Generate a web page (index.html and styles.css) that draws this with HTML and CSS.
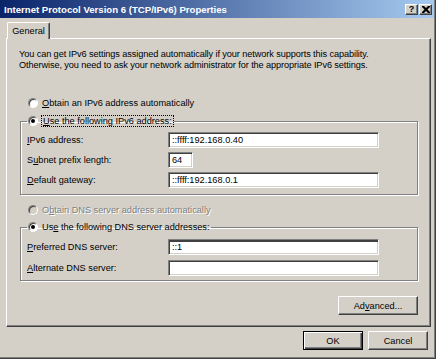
FILE: index.html
```html
<!DOCTYPE html>
<html lang="en">
<head>
    <meta charset="UTF-8">
    <title>Internet Protocol Version 6 (TCP/IPv6) Properties</title>
    <link rel="stylesheet" href="styles.css">
</head>
<body>
    <div class="window">
        <div class="titlebar">
            <span class="title">Internet Protocol Version 6 (TCP/IPv6) Properties</span>
            <div class="caption-btns">
                <span class="cap-btn help">?</span>
                <span class="cap-btn close">
                    <svg width="8" height="7" viewBox="0 0 8 7"><path d="M0 0h2l2 2 2-2h2v1l-2.5 2.5 2.5 2.5v1h-2l-2-2-2 2h-2v-1l2.5-2.5-2.5-2.5z"/></svg>
                </span>
            </div>
        </div>

        <div class="client">
            <div class="tabs"><span class="tab">General</span></div>

            <div class="panel">
                <p class="intro">You can get IPv6 settings assigned automatically if your network supports this capability.<br>Otherwise, you need to ask your network administrator for the appropriate IPv6 settings.</p>

                <div class="radio-row obtain"><span class="radio"></span><span><u>O</u>btain an IPv6 address automatically</span></div>

                <fieldset class="group">
                    <legend><span class="radio on"></span><span class="focus"><u>U</u>se the following IPv6 address:</span></legend>
                    <div class="field">
                        <span class="lbl"><u>I</u>Pv6 address:</span>
                        <span class="box">::ffff:192.168.0.40</span>
                    </div>
                    <div class="field">
                        <span class="lbl">S<u>u</u>bnet prefix length:</span>
                        <span class="box short">64</span>
                    </div>
                    <div class="field">
                        <span class="lbl"><u>D</u>efault gateway:</span>
                        <span class="box">::ffff:192.168.0.1</span>
                    </div>
                </fieldset>

                <div class="radio-row disabled"><span class="radio off"></span><span>O<u>b</u>tain DNS server address automatically</span></div>

                <fieldset class="group dns">
                    <legend><span class="radio on"></span><span>Us<u>e</u> the following DNS server addresses:</span></legend>
                    <div class="field">
                        <span class="lbl"><u>P</u>referred DNS server:</span>
                        <span class="box active">::1</span>
                    </div>
                    <div class="field">
                        <span class="lbl"><u>A</u>lternate DNS server:</span>
                        <span class="box"></span>
                    </div>
                </fieldset>

                <div class="panel-foot">
                    <span class="btn wide">Ad<u>v</u>anced...</span>
                </div>
            </div>

            <div class="dialog-btns">
                <span class="btn default">OK</span>
                <span class="btn">Cancel</span>
            </div>
        </div>
    </div>
</body>
</html>
```

FILE: styles.css
```css
body {
    margin: 0;
    font-family: "Liberation Sans", Arial, sans-serif;
    font-size: 9.2px;
    color: #000;
}
.window {
    width: 436px;
    height: 359px;
    box-sizing: border-box;
    background: #d4d0c8;
    border-right: 1px solid #404040;
    border-bottom: 1px solid #404040;
    box-shadow: inset -1px -1px 0 #808080;
}
.titlebar {
    width: 434px;
    height: 18px;
    box-sizing: border-box;
    padding: 0 2px 0 4px;
    display: flex;
    align-items: center;
    justify-content: space-between;
    background: linear-gradient(to right, #0a246a, #a6caf0);
}
.title {
    color: #fff;
    font-weight: bold;
    font-size: 9.6px;
}
.caption-btns {
    display: flex;
    gap: 1px;
}
.cap-btn {
    width: 13px;
    height: 11px;
    box-sizing: border-box;
    background: #d4d0c8;
    border: 1px solid;
    border-color: #fff #404040 #404040 #fff;
    box-shadow: inset -1px -1px 0 #808080;
    display: flex;
    align-items: center;
    justify-content: center;
}
.help {
    font-weight: bold;
    font-size: 9px;
    line-height: 9px;
}
.close svg {
    display: block;
}
.client {
    padding: 4px 4px 0 6px;
}
.tabs {
    display: flex;
    padding-left: 1px;
}
.tab {
    position: relative;
    height: 17px;
    width: 43px;
    box-sizing: border-box;
    margin-bottom: -1px;
    background: #d4d0c8;
    border: 1px solid;
    border-bottom: none;
    border-color: #fff #404040 #fff #fff;
    box-shadow: inset -1px 0 0 #808080;
    border-radius: 2px 2px 0 0;
    display: flex;
    align-items: center;
    justify-content: center;
}
.panel {
    height: 289px;
    box-sizing: border-box;
    border: 1px solid;
    border-color: #fff #404040 #404040 #fff;
    box-shadow: inset -1px -1px 0 #808080;
}
.intro {
    margin: 10px 0 0 12px;
    line-height: 11px;
    letter-spacing: -0.1px;
}
.radio-row {
    display: flex;
    align-items: center;
    height: 14px;
    padding-left: 21px;
}
.radio-row.obtain {
    margin-top: 25px;
}
.radio-row.disabled {
    margin-top: 8px;
    color: #808080;
    text-shadow: 1px 1px 0 #fff;
}
.radio {
    width: 10px;
    height: 10px;
    box-sizing: border-box;
    border-radius: 50%;
    background: #fff;
    border: 1px solid;
    border-color: #808080 #fff #fff #808080;
    box-shadow: inset 1px 1px 0 #404040;
    margin-right: 4px;
    flex: none;
    display: flex;
    align-items: center;
    justify-content: center;
}
.radio.on::after {
    content: "";
    width: 4px;
    height: 4px;
    border-radius: 50%;
    background: #000;
}
.radio.off {
    background: #d4d0c8;
}
.group {
    margin: 4px 12px 0 13px;
    padding: 4px 6px 6px 6px;
    min-width: 0;
    border: 1px solid #808080;
    box-shadow: 1px 1px 0 #fff, inset 1px 1px 0 #fff;
}
.group.dns {
    margin-top: 3px;
    padding-top: 5px;
    padding-bottom: 4px;
}
.group legend {
    display: flex;
    align-items: center;
    height: 14px;
    padding: 0 1px;
}
.focus {
    outline: 1px dotted #000;
    outline-offset: 0;
    padding: 0 1px;
}
.field {
    display: flex;
    align-items: center;
    height: 16px;
    margin-bottom: 4px;
}
.dns .field {
    margin-bottom: 5px;
}
.field:last-child {
    margin-bottom: 0;
}
.lbl {
    width: 141px;
    flex: none;
}
.box {
    width: 211px;
    height: 16px;
    box-sizing: border-box;
    background: #fff;
    border: 1px solid;
    border-color: #808080 #fff #fff #808080;
    box-shadow: inset 1px 1px 0 #404040, inset -1px -1px 0 #d4d0c8;
    padding: 0 3px;
    display: flex;
    align-items: center;
}
.box.short {
    width: 25px;
}
.box.active {
    box-shadow: inset 1px 2px 0 #404040, inset -1px -1px 0 #d4d0c8;
}
.panel-foot {
    display: flex;
    justify-content: flex-end;
    margin: 15px 12px 0 0;
}
.btn {
    width: 60px;
    height: 19px;
    box-sizing: border-box;
    background: #d4d0c8;
    border: 1px solid;
    border-color: #fff #404040 #404040 #fff;
    box-shadow: inset -1px -1px 0 #808080;
    display: flex;
    align-items: center;
    justify-content: center;
}
.btn.wide {
    width: 80px;
}
.btn.default {
    border-color: #000;
    box-shadow: inset 1px 1px 0 #fff, inset -1px -1px 0 #404040, inset -2px -2px 0 #808080;
}
.dialog-btns {
    display: flex;
    justify-content: flex-end;
    gap: 5px;
    margin: 4px 3px 0 0;
}
```
